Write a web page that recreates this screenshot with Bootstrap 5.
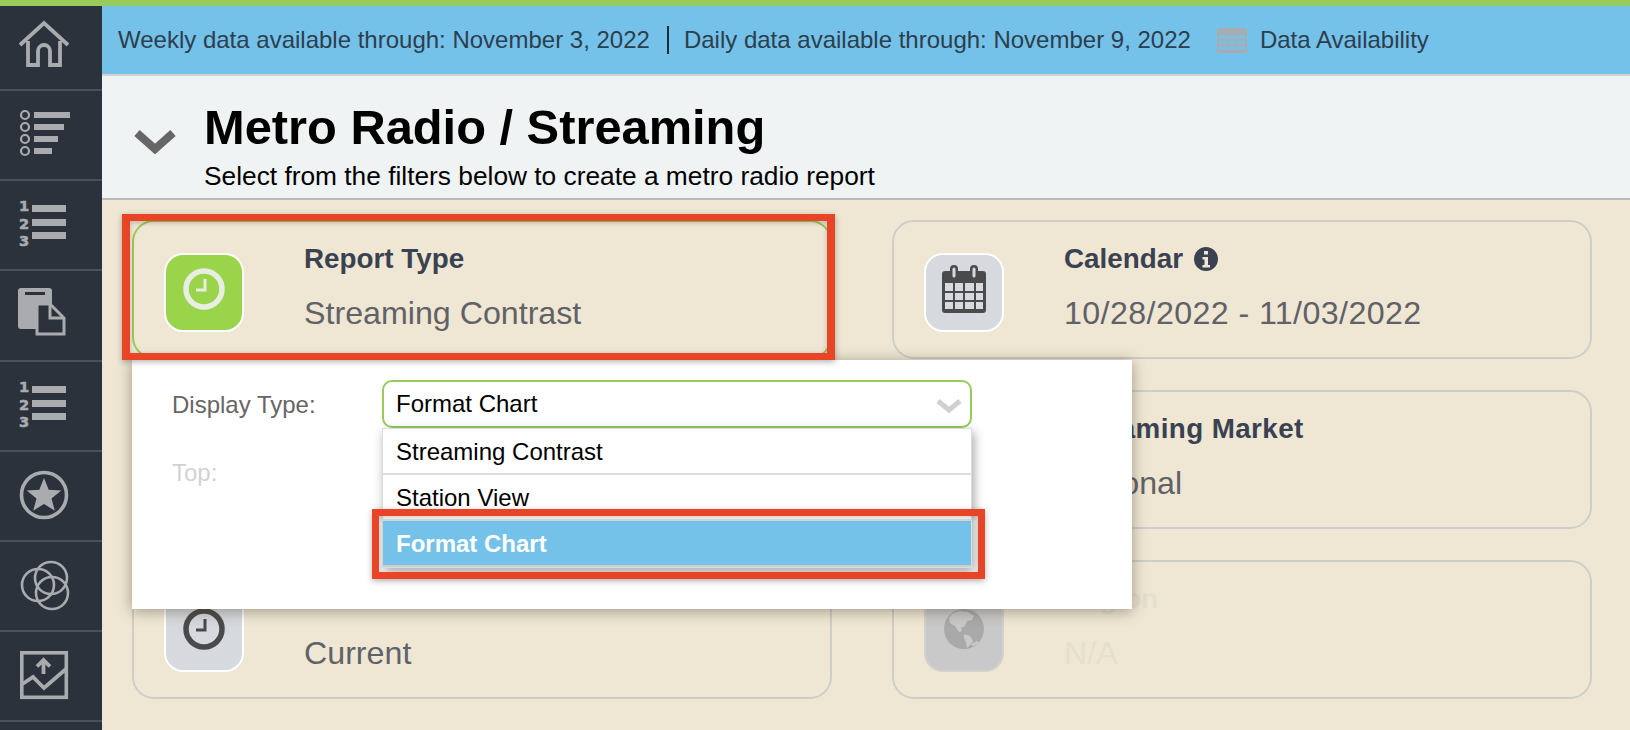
<!DOCTYPE html>
<html lang="en">
<head>
<meta charset="utf-8">
<title>Metro Radio / Streaming</title>
<link href="https://cdn.jsdelivr.net/npm/bootstrap@5.3.0/dist/css/bootstrap.min.css" rel="stylesheet">
<style>
html,body{height:730px;overflow:hidden}
body{font-family:"Liberation Sans",Arial,sans-serif;background:#efe7d4;color:#000}
.topline{height:6px;background:#97cb5b}
.shell{height:724px}
.side{width:102px;background:#2b323c;flex:none}
.side-item{height:90.2px;border-bottom:2px solid #4b515b}
.side-item:first-child{height:85px}
.side-item svg{display:block;width:101px;height:88px}
.side-item:first-child svg{height:83px}
.si{fill:#a9abae}
.so{fill:none;stroke:#a9abae}
.si-num{font:700 14.600px "DejaVu Sans",sans-serif;fill:#a9abae;stroke:#a9abae;stroke-width:.6px}
.availbar{height:70px;background:#74c2ea;border-bottom:2px solid #cfd3d5;padding-left:16px;font-size:24px;color:#2d3e4c}
.sep{width:2px;height:28px;background:#1e2a34;margin:0 15px 0 17px}
.avail-ico{margin-left:26px;margin-right:13px}
.headband{height:124px;background:#f0f3f4;border-bottom:2px solid #b9bcbd;padding-left:32px}
.headband h1{font-size:48.8px;font-weight:700;line-height:56px;margin:0}
.headband p{font-size:26.3px;line-height:30px;margin:6px 0 0}
.head-txt{padding-top:23px}
.chev{width:42px;height:24px;margin:54px 28px 0 0}
.stage{padding:20px 38px 0 30px;height:524px}
.filter-grid{display:grid;grid-template-columns:700px 700px;column-gap:60px;row-gap:31px}
.filter{height:139px;border:2px solid #cdcdca;border-radius:22px;padding:31px 0 0 30px;gap:60px}
.filter.on{border-color:#97cb5b}
.tile{width:80px;height:79px;border:2px solid #fff;border-radius:19px;background:#d6d9de;flex:none;padding-bottom:8px}
.tile.green{background:#9ad44a}
.tile.off{background:#c9c9c9;border-color:#d3d1cc}
.ftitle{font-size:27.800px;font-weight:700;color:#3a4252;line-height:32px;margin-top:-18px}
.ftitle-wide{letter-spacing:.4px}
.info-gap{gap:11px}
.fvalue{font-size:32.200px;color:#5f6267;line-height:38px;margin-top:19px}
.fv-date{letter-spacing:.4px}
.off-t{color:#e6dfce}
.flyout{position:absolute;left:30px;top:160px;width:1000px;height:249px;background:#fff;box-shadow:0 2px 14px rgba(60,50,30,.45);padding:20px 0 0 40px;z-index:5}
.fl-label{width:210px;font-size:24px;color:#666;line-height:48px;padding-top:1px}
.fl-label.dim{color:#d2d2d2;margin-top:19px}
.picker{width:590px}
.picker-head{height:48px;border:2px solid #97cb5b;border-radius:10px;font-size:24px;padding-left:12px;line-height:44px;background:#fff}
.opts{box-shadow:2px 4px 10px rgba(0,0,0,.35);border:1px solid #ddd}
.opts .list-group-item{height:46px;padding:1px 13px 0;font-size:24px;line-height:44px;color:#000;border-color:#ddd;border-bottom-width:2px}
.opts .list-group-item.picked{background:#74c2ea;color:#fff;font-weight:700;height:46px;border-color:#ccc;border-bottom-width:2px}
.redbox{position:absolute;border:7px solid #e84526;z-index:6;pointer-events:none;box-shadow:0 2px 6px rgba(0,0,0,.3),inset 0 2px 5px rgba(0,0,0,.2)}
.rb1{left:20px;top:14px;width:713px;height:146px;border-width:7px 8px}
.rb2{left:270px;top:309px;width:613px;height:70px}
</style>
</head>
<body>
<div class="topline"></div>
<div class="shell d-flex">
  <nav class="side">
    <div class="side-item"><svg viewBox="0 6 101 83"><path class="so" stroke-width="3.800" d="M20 45 44 23 68 45M28 41v24h10V51a6 6 0 0 1 12 0v14h10V41"/></svg></div>
    <div class="side-item"><svg viewBox="0 91 101 88"><g class="so" stroke-width="2.200"><circle cx="25" cy="115" r="4"/><circle cx="25" cy="127" r="4"/><circle cx="25" cy="139" r="4"/><circle cx="25" cy="151" r="4"/></g><path class="si" d="M34 112h36v6H34zM34 124h30v6H34zM34 136h24v6H34zM34 148h18v6H34z"/></svg></div>
    <div class="side-item"><svg viewBox="0 181 101 88"><text class="si-num" x="19" y="211">1</text><text class="si-num" x="19" y="228.500">2</text><text class="si-num" x="19" y="246">3</text><path class="si" d="M32 205h34v7H32zM32 219h34v7H32zM32 232h34v7H32z"/></svg></div>
    <div class="side-item"><svg viewBox="0 271 101 88"><rect class="si" x="18" y="288" width="34" height="41" rx="3"/><path fill="#2b323c" d="M25 292h20v3H25z"/><path fill="#2b323c" stroke="#a9abae" stroke-width="3" d="M37 304h13l14 14v16H37z"/><path class="so" stroke-width="3" d="M50 304v14h14"/></svg></div>
    <div class="side-item"><svg viewBox="0 361 101 88"><text class="si-num" x="19" y="391">1</text><text class="si-num" x="19" y="408.500">2</text><text class="si-num" x="19" y="426">3</text><path class="si" d="M32 385h34v7H32zM32 399h34v7H32zM32 412h34v7H32z"/></svg></div>
    <div class="side-item"><svg viewBox="0 451 101 88"><circle class="so" stroke-width="3.600" cx="44" cy="494" r="22.500"/><path class="si" d="m44 477 4.700 11.800 12.600.6-9.800 8 3.300 12.300L44 503l-10.800 6.700 3.300-12.300-9.800-8 12.600-.6z"/></svg></div>
    <div class="side-item"><svg viewBox="0 541 101 88"><g class="so" stroke-width="2.600"><circle cx="51" cy="577" r="16"/><circle cx="38" cy="584" r="16"/><circle cx="52" cy="592" r="16"/></g></svg></div>
    <div class="side-item"><svg viewBox="0 631 101 88"><rect class="so" stroke-width="3.600" x="21.800" y="651.800" width="44.500" height="44.500"/><path class="so" stroke-width="3.800" d="M21 684l12-8 11 11 22-19M43.500 673v-14M37 665.500l6.500-6.500 6.500 6.500"/></svg></div>
  </nav>
  <main class="flex-grow-1">
    <div class="availbar d-flex align-items-center">
      <span>Weekly data available through: November 3, 2022</span>
      <span class="sep"></span>
      <span>Daily data available through: November 9, 2022</span>
      <svg class="avail-ico" width="30" height="25" viewBox="0 0 30 25"><path fill="#a6adb2" d="M0 1.500A1.500 1.500 0 0 1 1.500 0h27A1.500 1.500 0 0 1 30 1.500v22a1.500 1.500 0 0 1-1.500 1.500h-27A1.500 1.500 0 0 1 0 23.500z"/><path fill="#74c2ea" opacity=".75" d="M2 7h8v4H2zM11 7h8v4h-8zM20 7h8v4h-8zM2 12.500h8v4H2zM11 12.500h8v4h-8zM20 12.500h8v4h-8zM2 18h8v4H2zM11 18h8v4h-8zM20 18h8v4h-8z"/></svg>
      <span>Data Availability</span>
    </div>
    <header class="headband d-flex">
      <svg class="chev" viewBox="0 0 42 24"><path fill="none" stroke="#666" stroke-width="8" d="M3 3l18 16L39 3"/></svg>
      <div class="head-txt">
        <h1>Metro Radio / Streaming</h1>
        <p>Select from the filters below to create a metro radio report</p>
      </div>
    </header>
    <section class="stage position-relative">
      <div class="filter-grid">
        <div class="filter on d-flex">
          <div class="tile green d-flex align-items-center justify-content-center">
            <svg width="42" height="42" viewBox="0 0 42 42"><circle cx="21" cy="21" r="18" fill="none" stroke="#e9eee2" stroke-width="5.500"/><path fill="none" stroke="#e9eee2" stroke-width="3" d="M22 11v11h-9"/></svg>
          </div>
          <div class="pt-2"><div class="ftitle">Report Type</div><div class="fvalue">Streaming Contrast</div></div>
        </div>
        <div class="filter d-flex">
          <div class="tile d-flex align-items-center justify-content-center">
            <svg width="44" height="48" viewBox="0 0 44 48"><rect y="6" width="44" height="42" rx="3" fill="#4a4a4a"/><rect x="8" width="8" height="16" rx="4" fill="#4a4a4a"/><rect x="28" width="8" height="16" rx="4" fill="#4a4a4a"/><rect x="10.500" y="2.500" width="3" height="10" rx="1.500" fill="#d6d9de"/><rect x="30.500" y="2.500" width="3" height="10" rx="1.500" fill="#d6d9de"/><path fill="#d6d9de" d="M3 18h8v8H3zM13 18h8v8h-8zM23 18h9v8h-9zM34 18h7v8h-7zM3 28h8v7H3zM13 28h8v7h-8zM23 28h9v7h-9zM34 28h7v7h-7zM3 37h8v7H3zM13 37h8v7h-8zM23 37h9v7h-9zM34 37h7v7h-7z"/></svg>
          </div>
          <div class="pt-2"><div class="ftitle d-flex align-items-center info-gap">Calendar <svg width="24" height="24" viewBox="0 0 24 24"><circle cx="12" cy="12" r="12" fill="#3a4252"/><path fill="#efe7d4" d="M10 4h4v3.500h-4zM8.500 10h5.500v8h2v2.500H8.500V18h2v-5.500h-2z"/></svg></div><div class="fvalue fv-date">10/28/2022 - 11/03/2022</div></div>
        </div>
        <div class="filter d-flex"></div>
        <div class="filter d-flex">
          <div class="tile"></div>
          <div class="pt-2"><div class="ftitle ftitle-wide">Streaming Market</div><div class="fvalue">National</div></div>
        </div>
        <div class="filter d-flex">
          <div class="tile d-flex align-items-center justify-content-center">
            <svg width="42" height="42" viewBox="0 0 42 42"><circle cx="21" cy="21" r="18" fill="none" stroke="#4a4a4a" stroke-width="5.500"/><path fill="none" stroke="#4a4a4a" stroke-width="3" d="M22 11v11h-9"/></svg>
          </div>
          <div class="pt-2"><div class="ftitle">&nbsp;</div><div class="fvalue">Current</div></div>
        </div>
        <div class="filter d-flex">
          <div class="tile off d-flex align-items-center justify-content-center">
            <svg width="42" height="42" viewBox="0 0 42 42"><circle cx="21" cy="21" r="20" fill="#a9a9a9"/><path fill="#c9c9c9" d="M9 6l7-3 9 1 6 4-2 4-5 1-2 5-4 2 1 3-3 1-4-6-5-3-1-5zM21 26l6 2 3 5-3 4-3 3-1-6-2-4zM28 36l6-3 2 2-6 3z"/></svg>
          </div>
          <div class="pt-2"><div class="ftitle off-t">Region</div><div class="fvalue off-t">N/A</div></div>
        </div>
      </div>
      <div class="flyout d-flex">
        <div>
          <div class="fl-label">Display Type:</div>
          <div class="fl-label dim">Top:</div>
        </div>
        <div class="picker">
          <div class="picker-head d-flex justify-content-between">Format Chart
            <svg class="me-2 mt-3" width="26" height="16" viewBox="0 0 26 16"><path fill="none" stroke="#d0d0d0" stroke-width="5" d="M2 3l11 9 11-9"/></svg>
          </div>
          <div class="list-group list-group-flush rounded-0 opts">
            <div class="list-group-item">Streaming Contrast</div>
            <div class="list-group-item">Station View</div>
            <div class="list-group-item picked">Format Chart</div>
          </div>
        </div>
      </div>
      <div class="redbox rb1"></div>
      <div class="redbox rb2"></div>
    </section>
  </main>
</div>
<script src="https://cdn.jsdelivr.net/npm/bootstrap@5.3.0/dist/js/bootstrap.bundle.min.js"></script>
</body>
</html>
